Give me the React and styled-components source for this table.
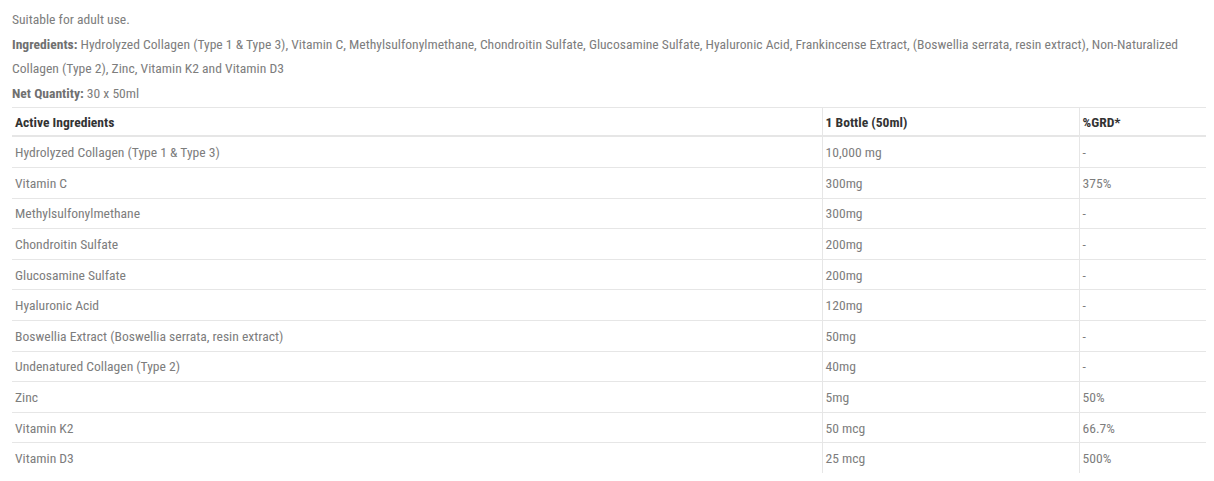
import React from 'react'
import styled, { createGlobalStyle } from 'styled-components'

const GlobalStyle = createGlobalStyle`
    html, body {
        margin: 0;
        padding: 0;
        background: #ffffff;
    }
`

const Container = styled.div`
    padding: 7px 9px 0 12px;
    font-family: "Roboto Condensed", "Liberation Sans Narrow", "DejaVu Sans Condensed", sans-serif;
    font-size: 13.6px;
    color: #7d7d7d;
`

const Paragraph = styled.p`
    margin: 0;
    line-height: 24.6px;
`

const Label = styled.strong`
    font-weight: 700;
    color: #707070;
`

const Table = styled.table`
    width: 1194px;
    border-collapse: collapse;
    margin-top: 2px;
    table-layout: fixed;
`

const Cell = styled.td`
    height: 29.6px;
    padding: 0 3px;
    border-top: 1px solid #e6e6e6;
    text-align: left;
    vertical-align: middle;
    & + & {
        border-left: 1px solid #e6e6e6;
    }
`

const HeadCell = styled(Cell).attrs({ as: 'th' })`
    height: 27px;
    color: #333333;
    font-weight: 700;
    border-bottom: 2px solid #e6e6e6;
`

const rows = [
    ['Hydrolyzed Collagen (Type 1 & Type 3)', '10,000 mg', '-'],
    ['Vitamin C', '300mg', '375%'],
    ['Methylsulfonylmethane', '300mg', '-'],
    ['Chondroitin Sulfate', '200mg', '-'],
    ['Glucosamine Sulfate', '200mg', '-'],
    ['Hyaluronic Acid', '120mg', '-'],
    ['Boswellia Extract (Boswellia serrata, resin extract)', '50mg', '-'],
    ['Undenatured Collagen (Type 2)', '40mg', '-'],
    ['Zinc', '5mg', '50%'],
    ['Vitamin K2', '50 mcg', '66.7%'],
    ['Vitamin D3', '25 mcg', '500%'],
]

export default function App() {
    return (
        <>
            <GlobalStyle />
            <Container>
                <Paragraph>Suitable for adult use.</Paragraph>
                <Paragraph>
                    <Label>Ingredients:</Label> Hydrolyzed Collagen (Type 1 &amp; Type 3), Vitamin C, Methylsulfonylmethane, Chondroitin Sulfate, Glucosamine Sulfate, Hyaluronic Acid, Frankincense Extract, (Boswellia serrata, resin extract), Non-Naturalized Collagen (Type 2), Zinc, Vitamin K2 and Vitamin D3
                </Paragraph>
                <Paragraph>
                    <Label>Net Quantity:</Label> 30 x 50ml
                </Paragraph>
                <Table>
                    <colgroup>
                        <col style={{ width: 810 }} />
                        <col style={{ width: 257 }} />
                        <col style={{ width: 127 }} />
                    </colgroup>
                    <thead>
                        <tr>
                            <HeadCell>Active Ingredients</HeadCell>
                            <HeadCell>1 Bottle (50ml)</HeadCell>
                            <HeadCell>%GRD*</HeadCell>
                        </tr>
                    </thead>
                    <tbody>
                        {rows.map((r) => (
                            <tr key={r[0]}>
                                <Cell>{r[0]}</Cell>
                                <Cell>{r[1]}</Cell>
                                <Cell>{r[2]}</Cell>
                            </tr>
                        ))}
                    </tbody>
                </Table>
            </Container>
        </>
    )
}
